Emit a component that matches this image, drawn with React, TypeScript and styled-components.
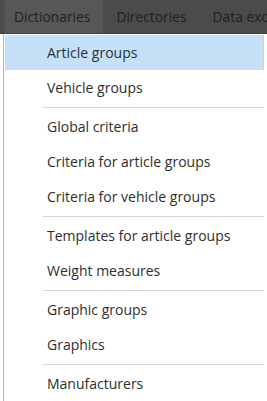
import React from "react";
import styled, { createGlobalStyle } from "styled-components";

const GlobalStyle = createGlobalStyle`
    html, body {
        margin: 0;
        padding: 0;
        background: #ffffff;
        overflow: hidden;
    }
    body {
        font-family: "Open Sans", "Noto Sans", sans-serif;
    }
`;

const Screen = styled.div`
    width: 267px;
    height: 401px;
    display: flex;
    flex-direction: column;
    overflow: hidden;
`;

const MenuBar = styled.div`
    height: 33px;
    flex-shrink: 0;
    display: flex;
    align-items: stretch;
    padding-left: 5px;
    background: #4b4b4b;
    border-bottom: 1px solid #3d3d3d;
    overflow: hidden;
`;

const BarItem = styled.div<{ $open?: boolean }>`
    display: flex;
    align-items: center;
    padding: ${(p) => (p.$open ? "0 13px 0 9px" : "0 13px")};
    font-size: 13.8px;
    color: #1f1f1f;
    white-space: nowrap;
    background: ${(p) => (p.$open ? "#575757" : "transparent")};
`;

const Body = styled.div`
    flex: 1;
    display: flex;
`;

const Backdrop = styled.div`
    width: 3px;
    flex-shrink: 0;
    background: #ffffff;
    border-right: 1px solid #b4b4b4;
`;

const Dropdown = styled.div`
    flex: 1;
    display: flex;
    flex-direction: column;
    padding: 1px 3px 0 1px;
    background: #ffffff;
`;

const Item = styled.div<{ $active?: boolean }>`
    height: 35px;
    flex-shrink: 0;
    display: flex;
    align-items: center;
    padding-left: 42px;
    box-sizing: border-box;
    font-size: 14px;
    color: ${(p) => (p.$active ? "#263140" : "#2e2e2e")};
    background: ${(p) => (p.$active ? "#c6e0f8" : "transparent")};
    border-right: 1px solid ${(p) => (p.$active ? "#b6d4ef" : "transparent")};
    white-space: nowrap;
`;

const Separator = styled.div`
    height: 4px;
    flex-shrink: 0;
    display: flex;
    align-items: center;
    padding-left: 38px;
    &::after {
        content: "";
        flex: 1;
        height: 1px;
        background: #d6d6d6;
    }
`;

type Entry = { label: string } | "sep";

const entries: Entry[] = [
    { label: "Article groups" },
    { label: "Vehicle groups" },
    "sep",
    { label: "Global criteria" },
    { label: "Criteria for article groups" },
    { label: "Criteria for vehicle groups" },
    "sep",
    { label: "Templates for article groups" },
    { label: "Weight measures" },
    "sep",
    { label: "Graphic groups" },
    { label: "Graphics" },
    "sep",
    { label: "Manufacturers" },
];

const App: React.FC = () => {
    return (
        <>
            <GlobalStyle />
            <Screen>
                <MenuBar>
                    <BarItem $open>Dictionaries</BarItem>
                    <BarItem>Directories</BarItem>
                    <BarItem>Data exchange</BarItem>
                </MenuBar>
                <Body>
                    <Backdrop />
                    <Dropdown>
                        {entries.map((e, i) =>
                            e === "sep" ? (
                                <Separator key={i} />
                            ) : (
                                <Item key={i} $active={i === 0}>
                                    {e.label}
                                </Item>
                            )
                        )}
                    </Dropdown>
                </Body>
            </Screen>
        </>
    );
};

export default App;
